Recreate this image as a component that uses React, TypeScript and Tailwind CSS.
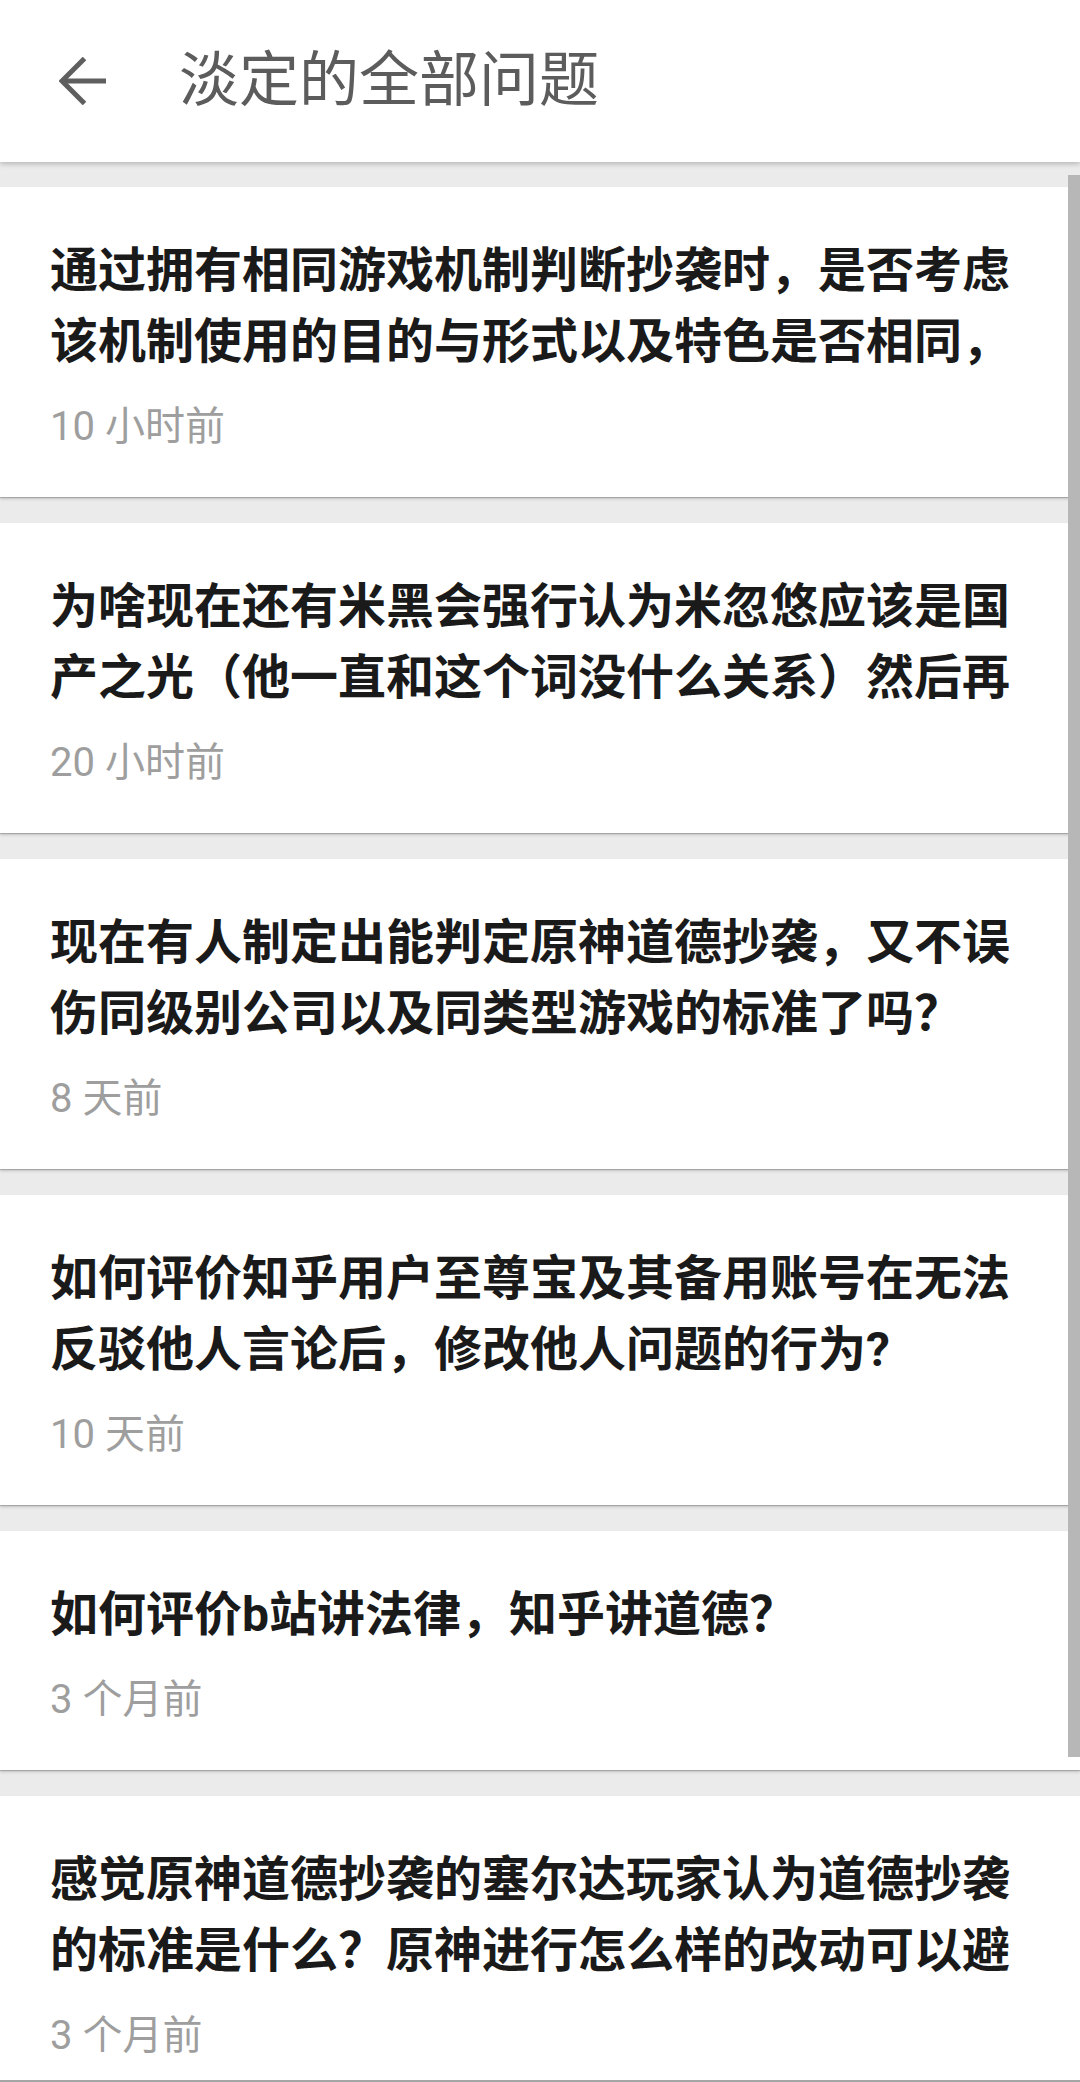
import React from "react";

const questions = [
  {
    title: "通过拥有相同游戏机制判断抄袭时，是否考虑该机制使用的目的与形式以及特色是否相同，",
    time: "10 小时前",
  },
  {
    title: "为啥现在还有米黑会强行认为米忽悠应该是国产之光（他一直和这个词没什么关系）然后再",
    time: "20 小时前",
  },
  {
    title: "现在有人制定出能判定原神道德抄袭，又不误伤同级别公司以及同类型游戏的标准了吗？",
    time: "8 天前",
  },
  {
    title: "如何评价知乎用户至尊宝及其备用账号在无法反驳他人言论后，修改他人问题的行为?",
    time: "10 天前",
  },
  {
    title: "如何评价b站讲法律，知乎讲道德？",
    time: "3 个月前",
  },
  {
    title: "感觉原神道德抄袭的塞尔达玩家认为道德抄袭的标准是什么？原神进行怎么样的改动可以避",
    time: "3 个月前",
  },
];

const BackArrow = () => (
  <svg width="48" height="48" viewBox="0 0 48 48" fill="none">
    <path d="M3 24 H47" stroke="#5f5f5f" strokeWidth="5" />
    <path d="M25.5 1.5 L3 24 L25.5 46.5" stroke="#5f5f5f" strokeWidth="5" />
  </svg>
);

const QuestionCard = ({ title, time }: { title: string; time: string }) => (
  <div className="bg-white pl-[50px] pr-[50px] pt-[48px] pb-[42px] shadow-[0_1px_1px_rgba(0,0,0,0.18),0_2px_3px_rgba(0,0,0,0.16)]">
    <div className="text-[48px] leading-[71px] font-bold text-[#1a1a1a] max-h-[142px] overflow-hidden">
      {title}
    </div>
    <div className="mt-[22px] text-[40px] leading-[56px] text-[#9e9e9e]">{time}</div>
  </div>
);

const App = () => {
  return (
    <div className="relative w-[1080px] h-[2082px] overflow-hidden bg-[#ebebeb] flex flex-col font-['Roboto','Noto_Sans_CJK_SC',sans-serif]">
      <header className="relative z-10 h-[162px] shrink-0 bg-white flex items-center shadow-[0_2px_5px_rgba(0,0,0,0.22)]">
        <div className="ml-[59px]">
          <BackArrow />
        </div>
        <h1 className="ml-[72px] text-[60px] leading-none font-normal text-[#5c5c5c]">淡定的全部问题</h1>
      </header>

      <div className="flex-1 min-h-0 overflow-hidden pt-[25px] flex flex-col gap-[26px]">
        {questions.map((q, i) => (
          <QuestionCard key={i} title={q.title} time={q.time} />
        ))}
      </div>

      <div className="h-[2px] shrink-0 bg-[#a5a5a5]" />

      {/* scrollbar thumb */}
      <div className="absolute right-0 top-[175px] w-[12px] h-[1582px] bg-[#b7b7b7]" />
    </div>
  );
};

export default App;
